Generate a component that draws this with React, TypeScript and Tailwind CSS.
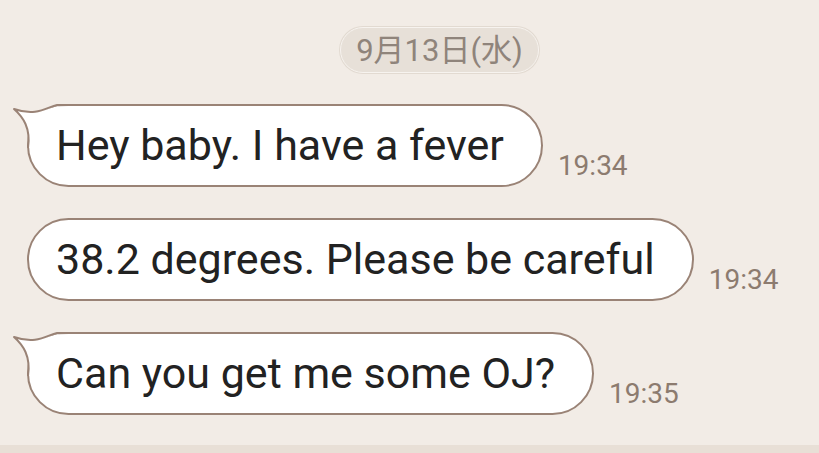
import React from "react";

function Tail() {
  return (
    <svg
      className="absolute -left-[2px] -top-[2px] overflow-visible"
      width="46"
      height="46"
      viewBox="0 0 46 46"
    >
      <path
        d="M48 2.2 L30 2.2 C20 4, 10 14, -13 5 C -4 13, 4 24, 2.2 44 L48 44 Z"
        fill="#ffffff"
      />
      <path
        d="M48 1 L30 1 C20 3, 10 13, -13 5 C -4 13, 4 24, 1 44"
        fill="none"
        stroke="#9a8376"
        strokeWidth="2"
        strokeLinejoin="round"
      />
    </svg>
  );
}

function Message({ text, time, tail }: { text: string; time: string; tail?: boolean }) {
  return (
    <div className="flex items-end">
      <div className="relative h-[83px] rounded-full border-2 border-[#9a8376] bg-white pl-[27px] pr-[37px] flex items-center">
        {tail && <Tail />}
        <span className="relative text-[43px] leading-none text-[#222222]">{text}</span>
      </div>
      <span className="ml-[15px] mb-[7px] text-[28px] leading-none text-[#8c7b6f]">{time}</span>
    </div>
  );
}

export default function App() {
  return (
    <div
      className="w-[819px] h-[453px] overflow-hidden bg-[#f2ece6] flex flex-col"
      style={{ fontFamily: 'Roboto, "Noto Sans CJK JP", sans-serif' }}
    >
      <div className="flex justify-center pl-[60px] pt-[27px]">
        <div className="h-[46px] px-[15px] rounded-full bg-[#e7e0d8] border border-[#f7f3ef] shadow-[0_0_0_1px_#e2dad1] flex items-center text-[31px] leading-none text-[#8f847b]">
          9月13日(水)
        </div>
      </div>
      <div className="flex flex-col gap-[31px] pl-[27px] pt-[31px]">
        <Message text="Hey baby. I have a fever" time="19:34" tail />
        <Message text="38.2 degrees. Please be careful" time="19:34" />
        <Message text="Can you get me some OJ?" time="19:35" tail />
      </div>
      <div className="flex-1" />
      <div className="h-[8px] bg-[#e8dfd6]" />
    </div>
  );
}
